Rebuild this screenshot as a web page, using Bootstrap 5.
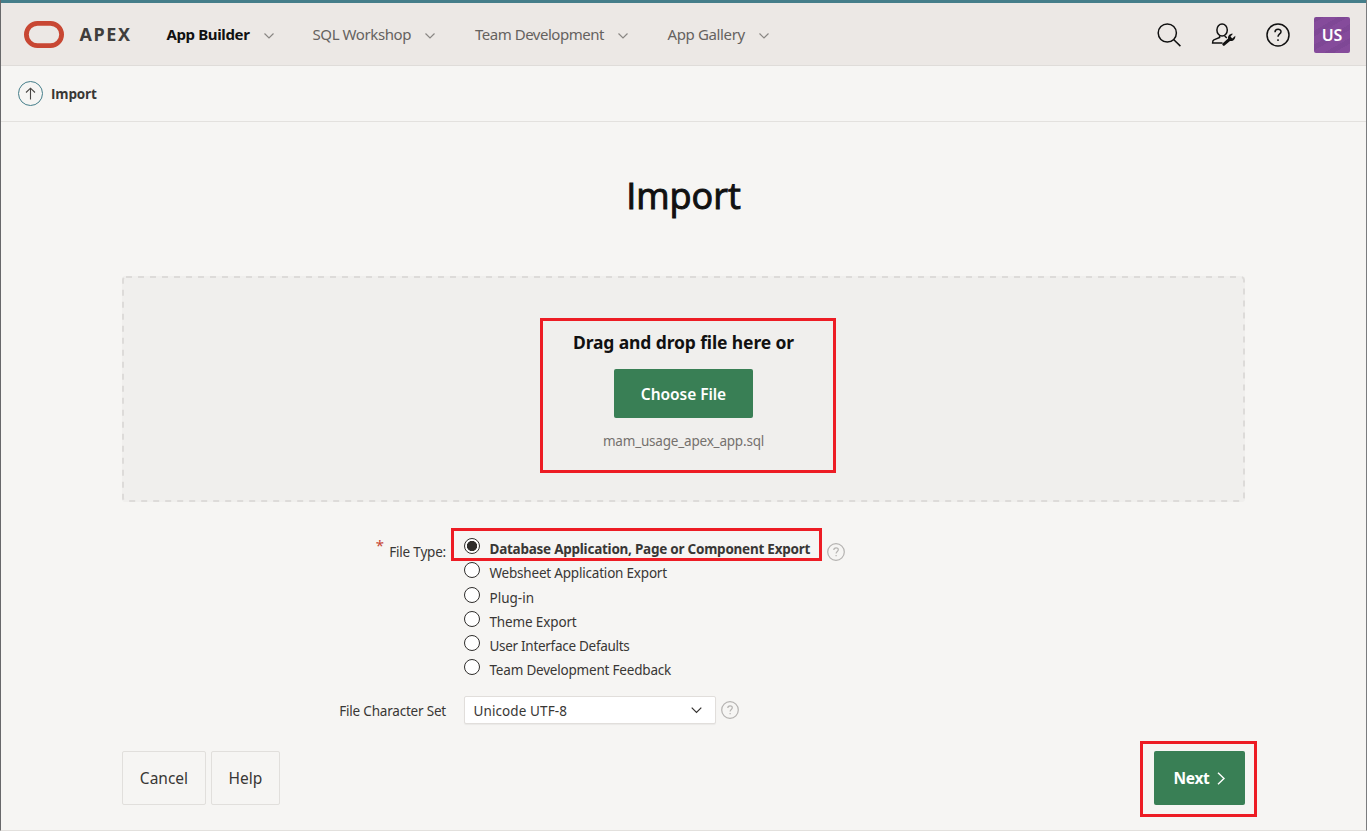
<!DOCTYPE html>
<html lang="en">
<head>
<meta charset="utf-8">
<title>Import</title>
<meta name="viewport" content="width=device-width, initial-scale=1">
<link href="https://cdn.jsdelivr.net/npm/bootstrap@5.3.0/dist/css/bootstrap.min.css" rel="stylesheet">
<script src="https://cdn.jsdelivr.net/npm/bootstrap@5.3.0/dist/js/bootstrap.bundle.min.js" defer></script>
<style>
  body { font-family: "Noto Sans", "Open Sans", sans-serif; font-size: 13.5px; letter-spacing: -.2px; line-height: 20px; color: #393735; background: #fff; height: 833px; overflow: hidden; }
  svg { display: block; flex: none; overflow: visible; }
  .app-shell { height: 831px; background: #f6f5f3; border-left: 1px solid #68686a; border-right: 1px solid #7b7c7e; border-bottom: 1px solid #e2e0dd; }
  .app-header { height: 66px; background: #ece8e5; border-top: 3px solid #457e8a; border-bottom: 1px solid #dfdcd9; padding: 0 16px 0 23px; flex-wrap: nowrap; }
  .brand-name { font-size: 18px; font-weight: 700; letter-spacing: 1.6px; margin-left: 15.5px; width: 87px; color: #403e3c; }
  .menu-link { font-size: 15px; color: #65625f; line-height: 20px; white-space: nowrap; }
  .menu-link svg { margin: 3px 0 0 14px; }
  .menu-link.current { font-weight: 700; color: #111; }
  .menu-app { width: 146px; letter-spacing: -.37px; }
  .menu-sql { width: 162.5px; letter-spacing: -.4px; }
  .menu-team { width: 192.5px; letter-spacing: -.48px; }
  .menu-gallery { letter-spacing: -.37px; }
  .tools { padding-top: 1px; margin-bottom: -1px; }
  .avatar { width: 36px; height: 36px; border-radius: 2px; color: #fff; font-size: 16px; font-weight: 600;
    background: repeating-linear-gradient(150deg, rgba(93,51,121,.16) 0 5px, transparent 5px 12px), #854b9b; }
  .crumbs { height: 56px; border-bottom: 1px solid #e3e1de; padding-left: 17px; }
  .crumb-title { font: 700 13.5px/20px "Open Sans", sans-serif; letter-spacing: -.15px; margin-left: 8px; }
  .page-title { font: 400 36px/44px "Open Sans", sans-serif; letter-spacing: 0; color: #111; -webkit-text-stroke: 1px #111; margin-top: 52px; }
  .wizard { margin: 0 121px; }
  .dropzone { height: 226px; background: #f0efed; border-radius: 3px; margin-top: 58px; padding-top: 54px; }
  .dropzone > svg { position: absolute; inset: 0; }
  .drop-hint { font-size: 17.5px; font-weight: 700; letter-spacing: -.12px; line-height: 24px; color: #111; }
  .btn { --bs-btn-font-family: inherit; border-radius: 2px; letter-spacing: 0; padding: 2px 0 0; }
  .btn-hot { background: #397f55; color: #fff; font-weight: 600; }
  .btn-choose { width: 139px; height: 49px; font-size: 15.5px; letter-spacing: -.05px; margin-top: 15px; }
  .file-name { color: #75716d; margin-top: 13px; }
  .field-label { width: 324px; text-align: right; margin-right: 18px; }
  .required-mark { color: #c74634; font-size: 15px; line-height: 6px; margin-right: 2px; vertical-align: top; }
  .choice { height: 24.25px; }
  .choice .form-check-input { width: 16px; height: 16px; margin: 3px 9.5px 0 0; float: none; border: 1px solid #302e2c; background-color: #fff; flex: none; }
  .choice .form-check-input:checked { background: radial-gradient(circle, #302e2c 0 4.8px, #fff 5.4px); }
  .choice label { margin-top: 4px; }
  .charset { width: 252px; height: 28px; border-radius: 2px; border: 1px solid #e1dedb; box-shadow: 0 1px 1px rgba(0,0,0,.05); background: #fff; padding: 0 13px 0 8.5px; letter-spacing: .1px; }
  .text-drop { padding-top: 2px; }
  .btn-plain { height: 54px; border: 1px solid #e1dfdc; color: #393735; font-size: 15.5px; }
  .btn-next { width: 91px; height: 54px; font-size: 15.5px; letter-spacing: -.35px; padding: 0 0 0; }
  .callout { position: absolute; border: 3px solid #ed1c24; pointer-events: none; }
</style>
</head>
<body>
<div class="app-shell d-flex flex-column">
  <header class="app-header navbar d-flex align-items-center">
    <div class="d-flex align-items-center">
      <svg width="40" height="27" viewBox="0 0 40 27"><rect x="2.4" y="2.4" width="35.2" height="22.2" rx="11.1" fill="none" stroke="#c84733" stroke-width="4.8"/></svg>
      <span class="brand-name">APEX</span>
      <nav class="d-flex">
        <a class="menu-link menu-app current d-flex align-items-center text-decoration-none">App Builder<svg width="10" height="6" viewBox="0 0 10 6"><path d="M.5.5 5 5 9.5.5" fill="none" stroke="#8a8784" stroke-width="1.2"/></svg></a>
        <a class="menu-link menu-sql d-flex align-items-center text-decoration-none">SQL Workshop<svg width="10" height="6" viewBox="0 0 10 6"><path d="M.5.5 5 5 9.5.5" fill="none" stroke="#8a8784" stroke-width="1.2"/></svg></a>
        <a class="menu-link menu-team d-flex align-items-center text-decoration-none">Team Development<svg width="10" height="6" viewBox="0 0 10 6"><path d="M.5.5 5 5 9.5.5" fill="none" stroke="#8a8784" stroke-width="1.2"/></svg></a>
        <a class="menu-link menu-gallery d-flex align-items-center text-decoration-none">App Gallery<svg width="10" height="6" viewBox="0 0 10 6"><path d="M.5.5 5 5 9.5.5" fill="none" stroke="#8a8784" stroke-width="1.2"/></svg></a>
      </nav>
    </div>
    <div class="tools d-flex align-items-center">
      <svg width="24" height="24" viewBox="0 0 24 24" fill="none" stroke="#111" stroke-width="1.5"><circle cx="10.3" cy="10" r="9.1"/><path d="m16.6 16.5 6.8 6.6"/></svg>
      <svg class="ms-4" width="36" height="24" viewBox="-6.8 0 36 24" fill="none" stroke="#111" stroke-width="1.5"><ellipse cx="10.3" cy="7" rx="5.2" ry="6"/><path d="M7.8 12.8v1.6l-5.7 2.5C.9 17.5.8 18.2.8 20h9.9M12.8 13l2.2 1.8"/><path d="M23.5 12.8l-3.1 2.6-1.7-1.8 2.5-2.8c-2.8-.6-5.5 1.8-4.9 4.8L10.7 20.5c-.9.9.9 3.2 2.1 2.1l5.4-4.6c2.9.7 5.7-1.9 5.3-5.2z" fill="#111" stroke="none"/></svg>
      <svg style="margin-left:25px" width="24" height="24" viewBox="0 0 24 24" fill="none" stroke="#111" stroke-width="1.5"><circle cx="12" cy="12" r="11"/><path d="M9 9.2c.1-3.8 6-3.8 6-.5 0 2.3-3 2.2-3 5.1M12 16.3v1.6"/></svg>
      <div class="avatar d-flex align-items-center justify-content-center ms-4">US</div>
    </div>
  </header>

  <div class="crumbs d-flex align-items-center">
    <svg width="25" height="25" viewBox="0 0 25 25" fill="none"><circle cx="12.5" cy="12.5" r="12" stroke="#457e8a"/><path d="M12.5 18.5v-11M8 11.5l4.5-4.3 4.5 4.3" stroke="#484543" stroke-width="1.1"/></svg>
    <span class="crumb-title">Import</span>
  </div>

  <main class="wizard">
    <h1 class="page-title text-center mb-0">Import</h1>

    <section class="dropzone position-relative d-flex flex-column align-items-center">
      <svg width="100%" height="100%"><rect x="1" y="1" width="1121" height="224" rx="3" fill="none" stroke="#dddbd9" stroke-width="2" stroke-dasharray="6 6"/></svg>
      <div class="drop-hint">Drag and drop file here or</div>
      <button class="btn btn-hot btn-choose">Choose File</button>
      <div class="file-name">mam_usage_apex_app.sql</div>
      <div class="callout" style="left:418px;top:42px;width:296px;height:155px"></div>
    </section>

    <div class="d-flex" style="margin-top:33px">
      <div class="field-label" style="padding-top:7px"><span class="required-mark">*</span> File Type:</div>
      <div class="position-relative">
        <div class="choice d-flex"><input class="form-check-input" type="radio" name="ft" id="f1" checked><label class="fw-bold" for="f1" style="letter-spacing:-.245px">Database Application, Page or Component Export</label></div>
        <div class="choice d-flex"><input class="form-check-input" type="radio" name="ft" id="f2"><label for="f2">Websheet Application Export</label></div>
        <div class="choice d-flex"><input class="form-check-input" type="radio" name="ft" id="f3"><label for="f3" style="letter-spacing:0">Plug-in</label></div>
        <div class="choice d-flex"><input class="form-check-input" type="radio" name="ft" id="f4"><label for="f4" style="letter-spacing:-.14px">Theme Export</label></div>
        <div class="choice d-flex"><input class="form-check-input" type="radio" name="ft" id="f5"><label for="f5" style="letter-spacing:-.29px">User Interface Defaults</label></div>
        <div class="choice d-flex"><input class="form-check-input" type="radio" name="ft" id="f6"><label for="f6">Team Development Feedback</label></div>
        <div class="callout" style="left:-13px;top:-7px;width:371px;height:33px"></div>
      </div>
      <svg style="margin:8px 0 0 16.5px" width="18" height="18" viewBox="0 0 18 18" fill="none" stroke="#b5b3b1" stroke-width="1.2"><circle cx="9" cy="9" r="8.3"/><path d="M6.8 7.1c.1-3 4.5-2.9 4.5-.3 0 1.7-2.2 1.6-2.2 3.7M9.1 12.1v1.2"/></svg>
    </div>

    <div class="d-flex align-items-center" style="margin-top:15.5px">
      <label class="field-label text-drop" for="cs">File Character Set</label>
      <div class="charset d-flex align-items-center justify-content-between" id="cs" role="combobox"><span class="text-drop">Unicode UTF-8</span><svg width="11" height="7" viewBox="0 0 11 7"><path d="M.7.7 5.5 5.5 10.3.7" fill="none" stroke="#33312f" stroke-width="1.2"/></svg></div>
      <svg style="margin-left:5px" width="18" height="18" viewBox="0 0 18 18" fill="none" stroke="#b5b3b1" stroke-width="1.2"><circle cx="9" cy="9" r="8.3"/><path d="M6.8 7.1c.1-3 4.5-2.9 4.5-.3 0 1.7-2.2 1.6-2.2 3.7M9.1 12.1v1.2"/></svg>
    </div>

    <footer class="d-flex" style="margin-top:27px">
      <button class="btn btn-plain" style="width:84px">Cancel</button>
      <button class="btn btn-plain" style="width:69px;margin-left:5px">Help</button>
      <div class="position-relative ms-auto">
        <button class="btn btn-hot btn-next fw-bold d-flex align-items-center justify-content-center gap-2"><span class="text-drop">Next</span><svg width="8" height="13" viewBox="0 0 8 13"><path d="m1 .7 6 5.8-6 5.8" fill="none" stroke="#fff" stroke-width="1.4"/></svg></button>
        <div class="callout" style="left:-14px;top:-10px;width:117px;height:76px"></div>
      </div>
    </footer>
  </main>
</div>
</body>
</html>
